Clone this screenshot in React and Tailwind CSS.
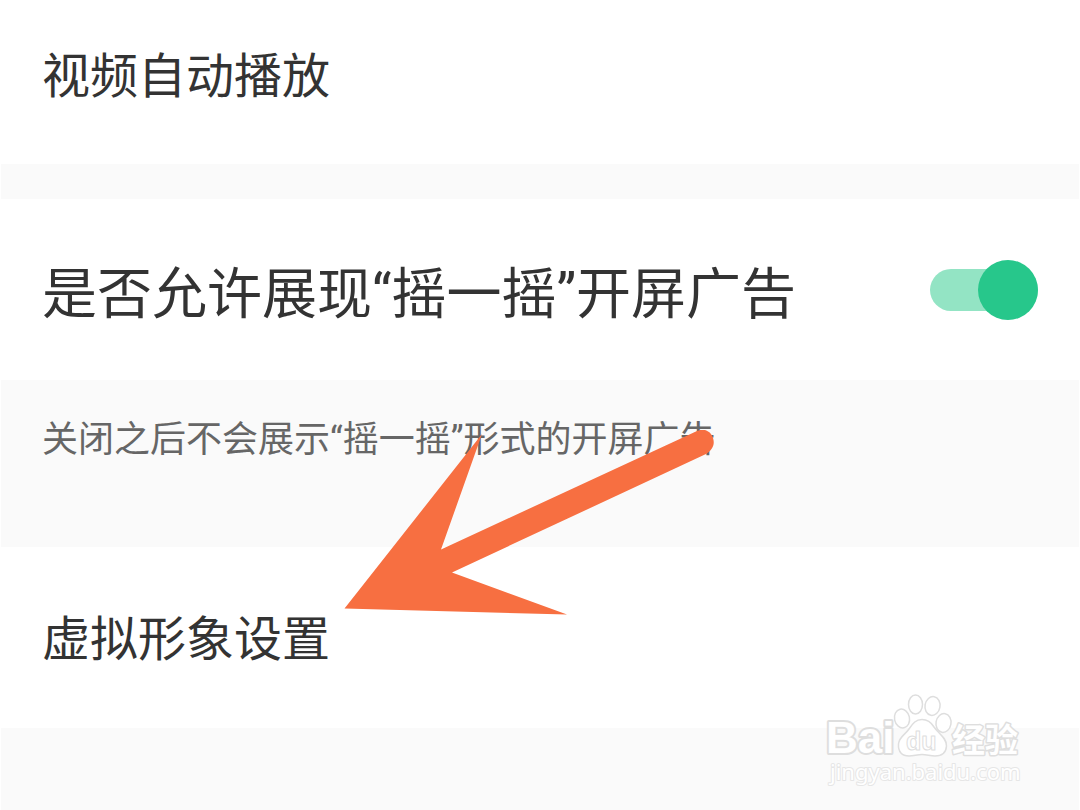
function SettingRow({ children, className = "" }) {
  return (
    <div
      className={`flex items-center justify-between gap-6 bg-white px-[41px] text-[#333333] ${className}`}
    >
      {children}
    </div>
  );
}

function PointerArrow() {
  return (
    <svg
      className="pointer-events-none absolute left-[344px] top-[430px]"
      width="371"
      height="186"
      viewBox="344 430 371 186"
      fill="#f76f41"
      aria-hidden="true"
    >
      <path d="M344.500 608.500 L482 434 L441 549.500 L697 431 C704 428 711 431 713 438 C715 444 713 450 706 454 L452 572.500 L567 614.500 Z" />
    </svg>
  );
}

function Watermark() {
  return (
    <svg
      className="pointer-events-none absolute right-[50px] top-[690px]"
      width="210"
      height="100"
      viewBox="820 690 210 100"
      fill="#ffffff"
      stroke="#dedede"
      strokeWidth="2"
      strokeLinejoin="round"
      role="img"
      aria-label="Baidu 经验 jingyan.baidu.com"
    >
      <text
        className="font-['Liberation_Sans',sans-serif] font-bold"
        x="826"
        y="753"
        fontSize="44"
        strokeWidth="4"
        paintOrder="stroke"
      >
        Bai
      </text>
      <g strokeWidth="1.500">
        <ellipse cx="902" cy="718.500" rx="7.500" ry="9.500" transform="rotate(-12 902 718.500)" />
        <ellipse cx="915.500" cy="704.500" rx="7" ry="9.500" />
        <ellipse cx="932.500" cy="706" rx="7.500" ry="9.500" transform="rotate(10 932.500 706)" />
        <ellipse cx="943.500" cy="723" rx="7.500" ry="9.500" transform="rotate(10 943.500 723)" />
        <path d="M922 719.500 C927 719.500 931 722 934 727 C938 733 947 738 946.500 746 C946 753 941 756 935 756 C930 756 927 754.500 922 754.500 C917 754.500 914 756 909 756 C902 756 898 752 898.500 744 C899 737 905 735 909 729 C913 723 916 719.500 922 719.500 Z" />
      </g>
      <text
        className="font-['Liberation_Sans',sans-serif] font-bold"
        x="906"
        y="750"
        fontSize="25"
        strokeWidth="1"
      >
        du
      </text>
      <text
        className="font-['Noto_Sans_CJK_SC',sans-serif] font-bold"
        x="952"
        y="752"
        fontSize="33"
        strokeWidth="3"
        paintOrder="stroke"
      >
        经验
      </text>
      <text
        className="font-['Noto_Sans',sans-serif]"
        x="830"
        y="780"
        fontSize="22"
        strokeWidth="2"
        stroke="#e6e6e6"
        paintOrder="stroke"
      >
        jingyan.baidu.com
      </text>
    </svg>
  );
}

export default function App() {
  return (
    <div className="relative min-h-screen overflow-hidden bg-white px-px font-[Roboto,'Noto_Sans_CJK_SC',sans-serif]">
      <main className="min-h-screen bg-[#fafafa]">
        <SettingRow className="h-[164px] pb-[10px]">
          <h2 className="text-[48px] leading-[64px]">视频自动播放</h2>
        </SettingRow>

        <SettingRow className="mt-[35px] h-[181px]">
          <label htmlFor="shake-ads" className="pt-2 text-[55px] leading-[72px]">
            是否允许展现“摇一摇”开屏广告
          </label>
          <span className="relative flex h-[60px] w-[108px] shrink-0 items-center">
            <input
              id="shake-ads"
              type="checkbox"
              role="switch"
              defaultChecked
              className="peer h-[42px] w-full cursor-pointer appearance-none rounded-full bg-gray-300 checked:bg-[#93e4c4]"
            />
            <span className="pointer-events-none absolute left-0 top-0 size-[60px] rounded-full bg-white peer-checked:left-auto peer-checked:right-0 peer-checked:bg-[#27c78b]" />
          </span>
        </SettingRow>

        <p className="h-[167px] px-[41px] pt-9 text-[36px] leading-[48px] text-[#666666]">
          关闭之后不会展示“摇一摇”形式的开屏广告
        </p>

        <SettingRow className="h-[181px] pt-1">
          <h2 className="text-[48px] leading-[64px]">虚拟形象设置</h2>
        </SettingRow>
      </main>
      <PointerArrow />
      <Watermark />
    </div>
  );
}
